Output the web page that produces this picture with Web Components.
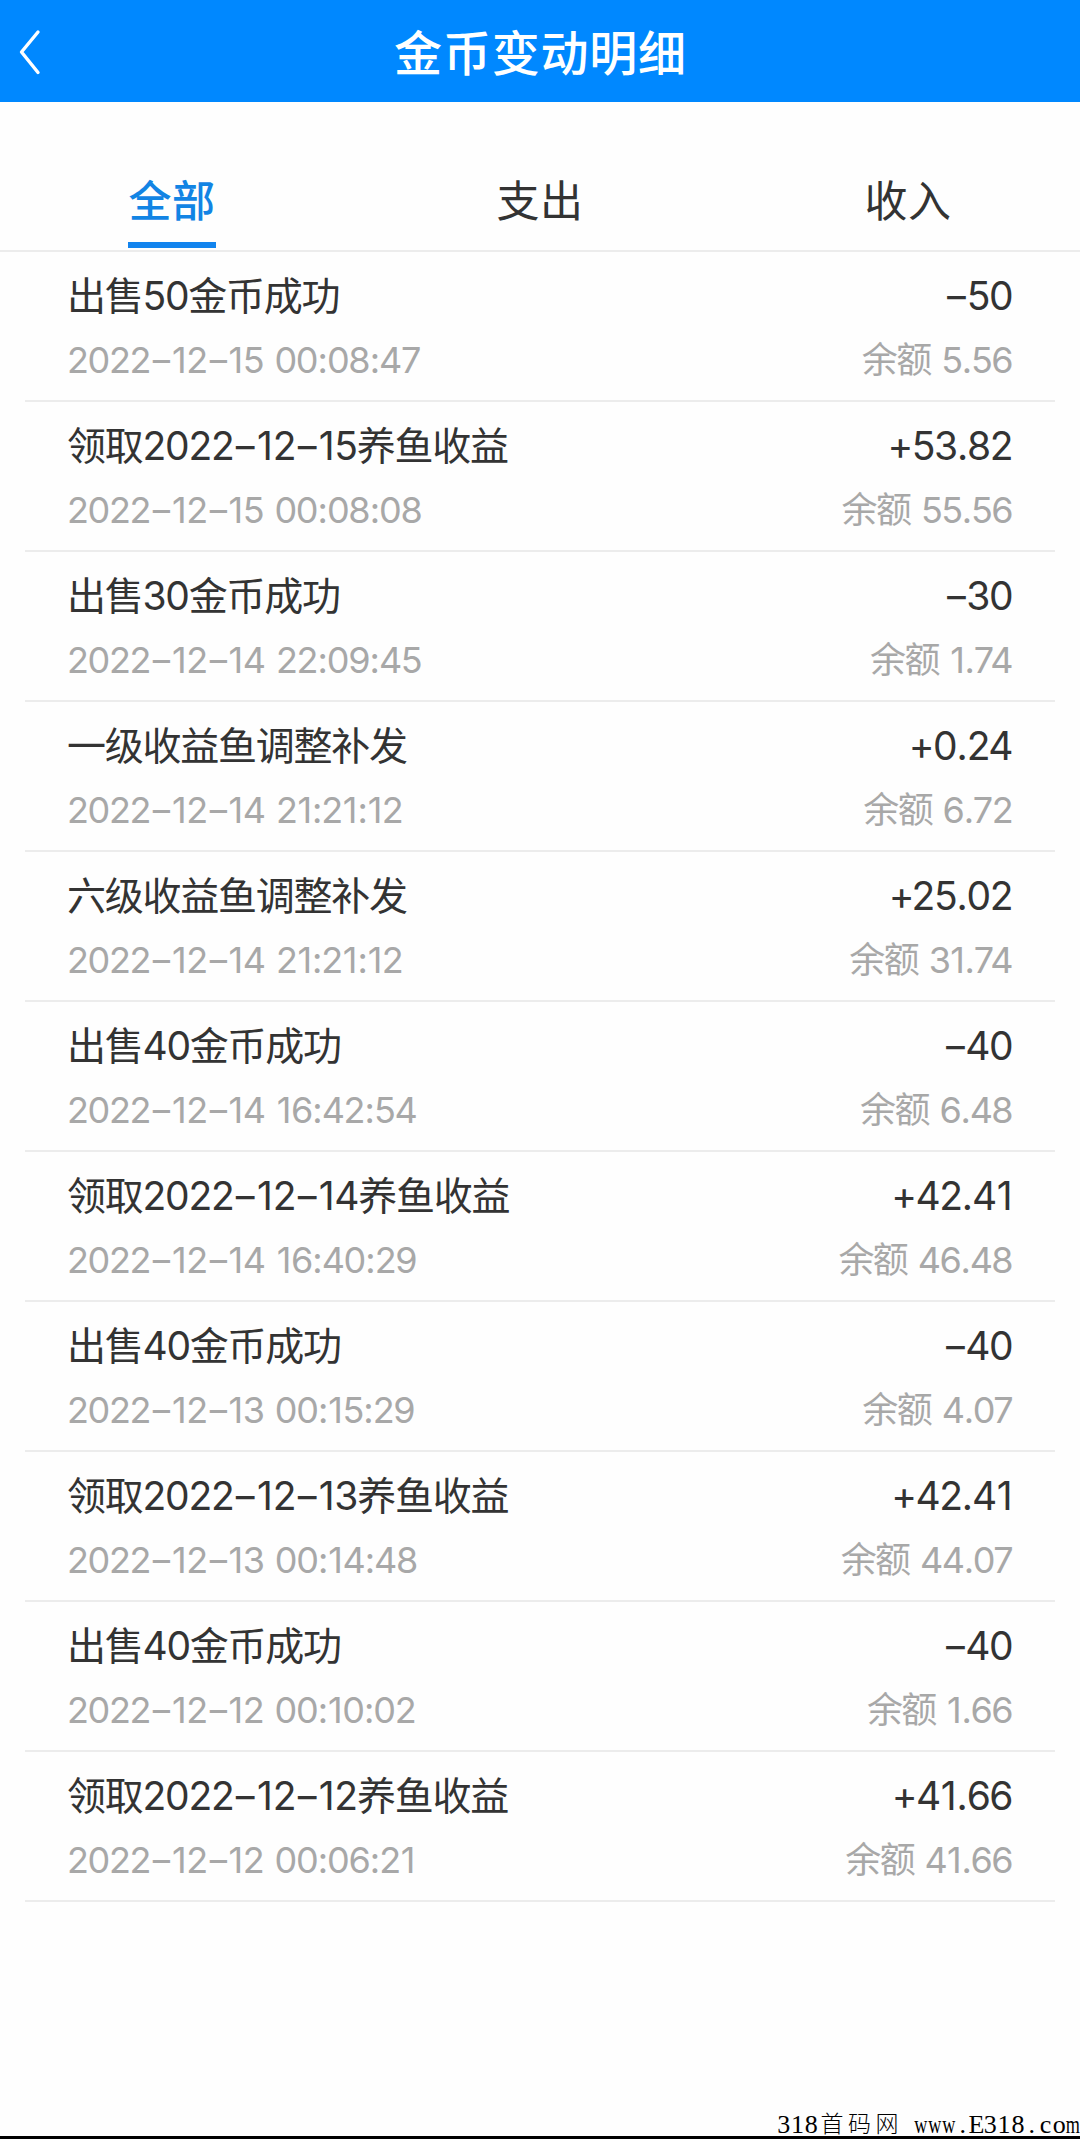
<!DOCTYPE html>
<html lang="zh-CN">
<head>
<meta charset="UTF-8">
<title>金币变动明细</title>
<style>
    body {
        margin: 0;
        background: #fefefe;
        color: #333;
        font-family: Inter, "Noto Sans CJK SC", sans-serif;
    }
</style>
</head>
<body>
<coin-page>
    <nav-header slot="header">金币变动明细</nav-header>
    <tab-bar slot="tabs">
        <tab-item active>全部</tab-item>
        <tab-item>支出</tab-item>
        <tab-item>收入</tab-item>
    </tab-bar>
    <record-list></record-list>
    <page-footer slot="footer" text="318首码网 www.E318.com"></page-footer>
</coin-page>

<script>
const RECORDS = [
    ['出售50金币成功', '2022-12-15 00:08:47', '-50', '5.56'],
    ['领取2022-12-15养鱼收益', '2022-12-15 00:08:08', '+53.82', '55.56'],
    ['出售30金币成功', '2022-12-14 22:09:45', '-30', '1.74'],
    ['一级收益鱼调整补发', '2022-12-14 21:21:12', '+0.24', '6.72'],
    ['六级收益鱼调整补发', '2022-12-14 21:21:12', '+25.02', '31.74'],
    ['出售40金币成功', '2022-12-14 16:42:54', '-40', '6.48'],
    ['领取2022-12-14养鱼收益', '2022-12-14 16:40:29', '+42.41', '46.48'],
    ['出售40金币成功', '2022-12-13 00:15:29', '-40', '4.07'],
    ['领取2022-12-13养鱼收益', '2022-12-13 00:14:48', '+42.41', '44.07'],
    ['出售40金币成功', '2022-12-12 00:10:02', '-40', '1.66'],
    ['领取2022-12-12养鱼收益', '2022-12-12 00:06:21', '+41.66', '41.66'],
];

class CoinPage extends HTMLElement {
    connectedCallback() {
        this.attachShadow({ mode: 'open' }).innerHTML = `
            <style>
                :host {
                    display: flex;
                    flex-direction: column;
                    height: 2139px;
                }

                main {
                    flex: 1;
                }
            </style>
            <slot name="header"></slot>
            <slot name="tabs"></slot>
            <main><slot></slot></main>
            <slot name="footer"></slot>
        `;
    }
}

class NavHeader extends HTMLElement {
    connectedCallback() {
        this.attachShadow({ mode: 'open' }).innerHTML = `
            <style>
                :host {
                    display: grid;
                    grid-template-columns: 60px 1fr 60px;
                    align-items: center;
                    height: 102px;
                    background: #0088ff;
                    color: #fff;
                }

                svg {
                    display: block;
                    margin-left: 18px;
                }

                h1 {
                    margin: 0;
                    padding: 5px 0 0 1px;
                    text-align: center;
                    font-size: 48px;
                    font-weight: 500;
                    line-height: 97px;
                    letter-spacing: 0.8px;
                }
            </style>
            <svg width="24" height="48" viewBox="0 0 24 48" fill="none" stroke="#fff" stroke-width="3.4" stroke-linecap="round" stroke-linejoin="round">
                <path d="M20 5L3.5 25L20 45.5"/>
            </svg>
            <h1><slot></slot></h1>
        `;
    }
}

class TabBar extends HTMLElement {
    connectedCallback() {
        this.attachShadow({ mode: 'open' }).innerHTML = `
            <style>
                :host {
                    display: flex;
                    justify-content: space-between;
                    align-items: flex-end;
                    box-sizing: border-box;
                    height: 150px;
                    padding: 0 128px 2px;
                    border-bottom: 2px solid #ececec;
                }
            </style>
            <slot></slot>
        `;
    }
}

class TabItem extends HTMLElement {
    connectedCallback() {
        this.attachShadow({ mode: 'open' }).innerHTML = `
            <style>
                :host {
                    display: block;
                    width: 88px;
                    padding-bottom: 9px;
                    border-bottom: 6px solid transparent;
                    text-align: center;
                    font-size: 43px;
                    line-height: 64px;
                    letter-spacing: 0.5px;
                    white-space: nowrap;
                }

                :host([active]) {
                    border-color: #1284ee;
                    color: #1284e4;
                    font-weight: 500;
                }
            </style>
            <slot></slot>
        `;
    }
}

class RecordList extends HTMLElement {
    connectedCallback() {
        this.attachShadow({ mode: 'open' }).innerHTML = `
            <style>
                :host {
                    display: block;
                    padding: 0 25px;
                }
            </style>
            ${RECORDS.map(([title, time, amount, balance]) => `
                <record-row title-text="${title}" time="${time}" amount="${amount}" balance="${balance}"></record-row>
            `).join('')}
        `;
    }
}

class RecordRow extends HTMLElement {
    connectedCallback() {
        this.attachShadow({ mode: 'open' }).innerHTML = `
            <style>
                :host {
                    display: grid;
                    grid-template-columns: 1fr auto;
                    grid-template-rows: 50px 44px;
                    row-gap: 17px;
                    box-sizing: border-box;
                    height: 150px;
                    padding: 19px 43px 0 42px;
                    border-bottom: 2px solid #ececec;
                    white-space: nowrap;
                }

                .main {
                    font-size: 39px;
                    line-height: 50px;
                    letter-spacing: -1.25px;
                }

                .sub {
                    color: #a8a8a8;
                    font-size: 36px;
                    line-height: 44px;
                    letter-spacing: -1.35px;
                    word-spacing: 2.5px;
                }

                .right {
                    text-align: right;
                }

                .main.right {
                    letter-spacing: -1.5px;
                }

                .sub.right {
                    letter-spacing: -1.6px;
                    word-spacing: 2px;
                }

                /* wide dash, as long as a digit */
                .dash {
                    display: inline-block;
                    width: 0.58em;
                    text-align: center;
                    transform: scaleX(1.5);
                }

                /* the narrow signs get some air */
                .one {
                    margin: 0 0.025em;
                }

                .dot {
                    margin: 0 0.01em;
                }
            </style>
            <span class="main">${this.#text('title-text')}</span>
            <span class="main right">${this.#text('amount')}</span>
            <span class="sub">${this.#text('time')}</span>
            <span class="sub right">余额 ${this.#text('balance')}</span>
        `;
    }

    #text(name) {
        const types = { '-': 'dash', '1': 'one', ':': 'dot', '.': 'dot' };
        return this.getAttribute(name).replace(/[-1:.]/g, (char) => `<span class="${types[char]}">${char}</span>`);
    }
}

class PageFooter extends HTMLElement {
    connectedCallback() {
        const cells = [...this.getAttribute('text')].map((char) => {
            const type = /[wm]/.test(char) ? 'wide' : char > '\u2000' ? 'cjk' : '';
            return `<span class="${type}">${char}</span>`;
        }).join('');

        this.attachShadow({ mode: 'open' }).innerHTML = `
            <style>
                :host {
                    display: flex;
                    justify-content: flex-end;
                    align-items: flex-end;
                    box-sizing: border-box;
                    height: 40px;
                    padding-bottom: 4px;
                    background: linear-gradient(#000, #000) bottom / 100% 3px no-repeat;
                    color: #000;
                    font-family: "Liberation Serif", "Noto Sans CJK SC", serif;
                    font-size: 26px;
                    line-height: 20px;
                    white-space: pre;
                }

                span {
                    display: flex;
                    justify-content: center;
                    width: 13.8px;
                    height: 20px;
                }

                .wide {
                    transform: scaleX(0.7);
                }

                .cjk {
                    width: 27.5px;
                    font-size: 23px;
                    font-weight: 300;
                }
            </style>
            ${cells}
        `;
    }
}

customElements.define('coin-page', CoinPage);
customElements.define('nav-header', NavHeader);
customElements.define('tab-bar', TabBar);
customElements.define('tab-item', TabItem);
customElements.define('record-list', RecordList);
customElements.define('record-row', RecordRow);
customElements.define('page-footer', PageFooter);
</script>
</body>
</html>
